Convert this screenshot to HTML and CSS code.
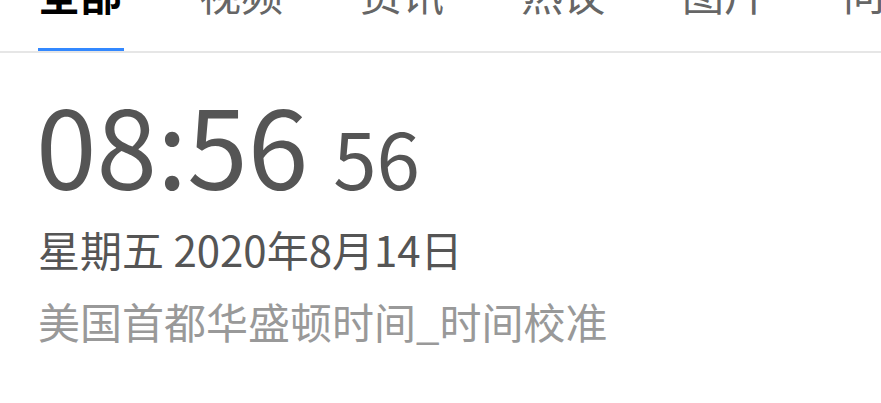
FILE: index.html
```html
<!DOCTYPE html>
<html lang="zh-CN">
<head>
<meta charset="utf-8">
<link rel="stylesheet" href="styles.css">
</head>
<body>
<nav class="tabs">
  <a class="tab active">全部</a>
  <a class="tab">视频</a>
  <a class="tab">资讯</a>
  <a class="tab">热议</a>
  <a class="tab">图片</a>
  <a class="tab">问答</a>
</nav>
<main class="clock">
  <div class="time"><span class="hm">08:56</span><span class="sec">56</span></div>
  <div class="date">星期五 2020年8月14日</div>
  <div class="zone">美国首都华盛顿时间_时间校准</div>
</main>
</body>
</html>
```
FILE: styles.css
```css
html, body {
  margin: 0;
  padding: 0;
  background: #fff;
  overflow: hidden;
}
body {
  font-family: "Noto Sans CJK SC", "Noto Sans", sans-serif;
  width: 881px;
  height: 403px;
}
.tabs {
  display: flex;
  gap: 75px;
  margin-top: -28px;
  padding-left: 38px;
  border-bottom: 2px solid #e6e6e6;
  white-space: nowrap;
  overflow: hidden;
}
.tab {
  font-size: 42px;
  line-height: 42px;
  color: #666;
  padding: 0 2px 34px 0;
  margin-bottom: -2px;
  border-bottom: 5px solid transparent;
  flex: none;
}
.tab.active {
  color: #000;
  font-weight: 700;
  border-bottom-color: #3388ff;
}
.clock {
  padding-left: 38px;
}
.time {
  margin-top: 35px;
  color: #555;
  line-height: 110px;
  height: 110px;
  margin-left: -2px;
  white-space: nowrap;
}
.hm {
  font-size: 109px;
}
.sec {
  font-size: 78px;
  margin-left: 25px;
}
.date {
  margin-top: 30px;
  font-size: 42px;
  line-height: 42px;
  color: #555;
}
.zone {
  margin-top: 30px;
  font-size: 42px;
  line-height: 42px;
  color: #999;
}
```
